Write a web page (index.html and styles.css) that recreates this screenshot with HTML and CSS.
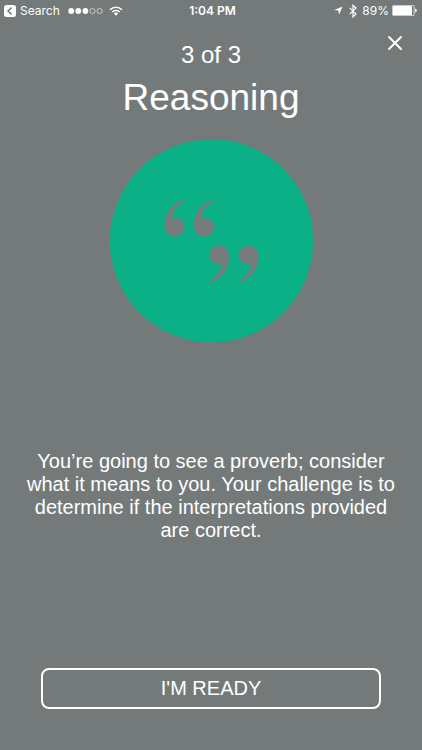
FILE: index.html
```html
<!DOCTYPE html>
<html lang="en">
<head>
<meta charset="utf-8">
<meta name="viewport" content="width=device-width, initial-scale=1">
<title>Reasoning</title>
<link rel="stylesheet" href="styles.css">
</head>
<body>
<div class="screen">
  <header class="status">
    <div class="status-side">
      <a class="back" href="#">
        <svg width="12" height="12" viewBox="0 0 12 12" aria-hidden="true"><rect width="12" height="12" rx="2.5" fill="#fff"/><path d="M7.5 2.600 4.100 6l3.400 3.400" fill="none" stroke="#747a79" stroke-width="1.5"/></svg>
        <span>Search</span>
      </a>
      <svg class="signal" width="35" height="8" viewBox="0 0 35 8" aria-hidden="true"><g fill="#fff"><circle cx="3.2" cy="4" r="2.9"/><circle cx="10.3" cy="4" r="2.9"/><circle cx="17.4" cy="4" r="2.9"/></g><g fill="none" stroke="#fff" stroke-width=".6"><circle cx="24.5" cy="4" r="2.6"/><circle cx="31.6" cy="4" r="2.6"/></g></svg>
      <svg width="14" height="10" viewBox="0 0 14 10" aria-hidden="true"><g fill="none" stroke="#fff" stroke-width="1.6"><path d="M1 3.7a8.5 8.5 0 0 1 12 0"/><path d="M3.2 6a5.4 5.4 0 0 1 7.6 0"/></g><path d="M7 9.7 4.9 7.6a3 3 0 0 1 4.2 0z" fill="#fff"/></svg>
    </div>
    <time class="clock">1:04 PM</time>
    <div class="status-side status-right">
      <svg width="9" height="9" viewBox="0 0 9 9" aria-hidden="true"><path d="M8.6.4 5 8.8 4.4 4.6.2 4z" fill="#fff"/></svg>
      <svg class="bluetooth" width="8" height="14" viewBox="0 0 8 14" aria-hidden="true"><path d="M.7 3.9 7 9.9 4 12.8V1.2L7 4.1.7 10.1" fill="none" stroke="#fff" stroke-width="1.2"/></svg>
      <span>89%</span>
      <svg width="25" height="11" viewBox="0 0 25 11" aria-hidden="true"><rect x=".4" y=".4" width="21.8" height="10.2" rx="1.2" fill="none" stroke="#fff" stroke-width=".7"/><rect x="1" y="1" width="19" height="9" rx=".5" fill="#fff"/><path d="M23.2 3.6q1.6.3 1.6 1.9t-1.6 1.9z" fill="#fff"/></svg>
    </div>
  </header>
  <button class="close" type="button" aria-label="Close">
    <svg width="16" height="16" viewBox="0 0 16 16" aria-hidden="true"><path d="m2 2 12 12M14 2 2 14" fill="none" stroke="#fff" stroke-width="2" stroke-linecap="round"/></svg>
  </button>
  <main class="intro">
    <p class="step">3 of 3</p>
    <h1 class="title">Reasoning</h1>
    <svg class="emblem" viewBox="109 138 204 205" aria-hidden="true">
      <defs><path id="quote" d="M182.600 199.400C172.500 203 164.300 211.500 164.300 224.800C164.300 231.700 168.500 235.700 174 235.700C179.800 235.700 184 231.700 184 226.500C184 221.200 180 217.500 175.500 217.500C174 217.500 172.500 217.600 171.700 217.800C171.600 211.500 176.500 205 183.300 201.200Q184.200 199.500 182.600 199.400Z"/></defs>
      <circle cx="211.200" cy="240.400" r="101.700" fill="#0cb087"/>
      <g fill="#777b7b">
        <use href="#quote"/>
        <use href="#quote" x="29.3"/>
        <g transform="rotate(180 196.500 240.500)"><use href="#quote"/><use href="#quote" x="-29.3"/></g>
      </g>
    </svg>
    <p class="text">You’re going to see a proverb; consider what it means to you. Your challenge is to determine if the interpretations provided are correct.</p>
  </main>
  <button class="ready" type="button">I'M READY</button>
</div>
</body>
</html>
```
FILE: styles.css
```css
* {
  box-sizing: border-box;
}

body {
  margin: 0;
  background: #747a79;
  color: #fff;
  font-family: "Liberation Sans", Arial, sans-serif;
}

.screen {
  position: relative;
  display: flex;
  flex-direction: column;
  min-height: 100vh;
  padding-bottom: 41px;
}

.status {
  display: flex;
  align-items: center;
  height: 21px;
  padding: 0 5px 0 4px;
  font-family: Inter, "Liberation Sans", sans-serif;
  font-size: 12px;
}

.status-side {
  display: flex;
  flex: 1;
  align-items: center;
  gap: 6px;
}

.status-right {
  justify-content: flex-end;
  gap: 3px;
}

.back {
  display: flex;
  align-items: center;
  gap: 4px;
  color: inherit;
  text-decoration: none;
}

.signal {
  margin-left: 2px;
}

.bluetooth {
  margin: 0 2px 0 3px;
}

.clock {
  padding-left: 4px;
  font-weight: 600;
}

.close {
  position: absolute;
  top: 31px;
  right: 15px;
  display: flex;
  padding: 4px;
  border: 0;
  background: none;
  cursor: pointer;
}

.intro {
  display: flex;
  flex: 1;
  flex-direction: column;
  align-items: center;
  padding: 20px 20px 0;
  text-align: center;
}

.step {
  margin: 0;
  font-size: 24px;
  line-height: 28px;
}

.title {
  margin: 8px 0 19px;
  font-size: 37px;
  font-weight: 400;
  line-height: 42px;
}

.emblem {
  width: 204px;
  height: 205px;
}

.text {
  max-width: 380px;
  margin: 107px 0 24px;
  font-size: 20px;
  line-height: 23px;
}

.ready {
  height: 41px;
  margin: 0 41px;
  border: 2px solid #fff;
  border-radius: 8px;
  background: none;
  color: inherit;
  font: inherit;
  font-size: 20px;
  cursor: pointer;
}
```
